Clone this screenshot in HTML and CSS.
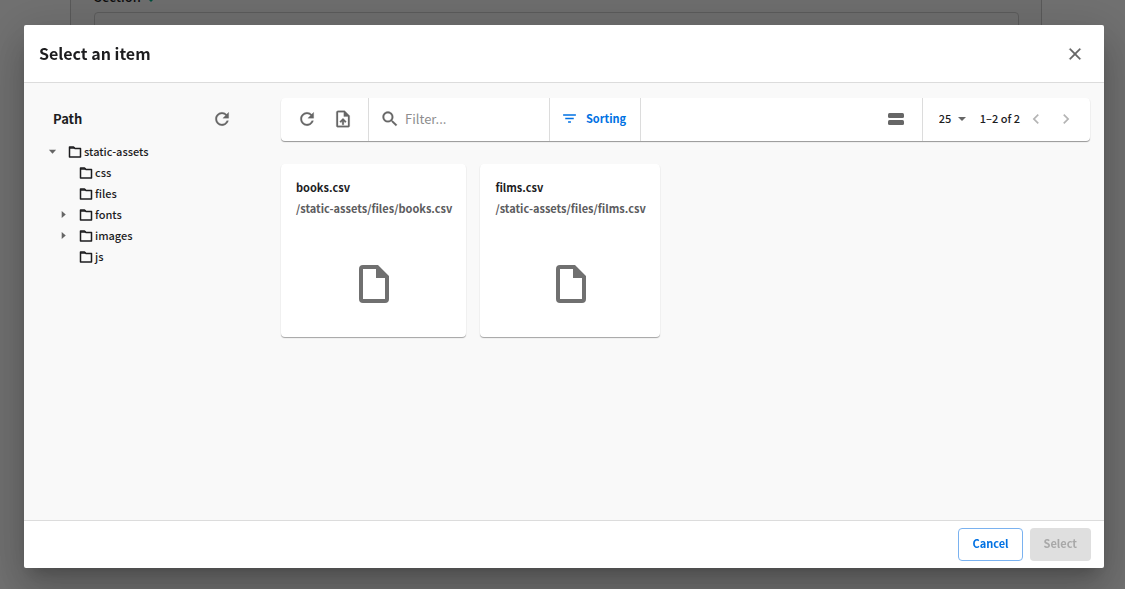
FILE: index.html
```html
<!DOCTYPE html>
<html lang="en">
<head>
    <meta charset="UTF-8">
    <title>Select an item</title>
    <link rel="stylesheet" href="styles.css">
</head>
<body>
    <div class="page">
        <div class="panel">
            <div class="panel-label">
                Section
                <svg class="valid-icon" viewBox="0 0 10 10"><path d="M5 0l5 5-5 5-5-5z"/></svg>
            </div>
            <div class="panel-field"></div>
        </div>
    </div>

    <div class="backdrop">
        <div class="dialog" role="dialog" aria-labelledby="dialogTitle">
            <header class="dialog-header">
                <h1 id="dialogTitle">Select an item</h1>
                <button class="icon-btn" aria-label="Close">
                    <svg class="icon icon-bold" viewBox="0 0 24 24"><path d="M19 6.41L17.59 5 12 10.59 6.41 5 5 6.41 10.59 12 5 17.59 6.41 19 12 13.41 17.59 19 19 17.59 13.41 12z"/></svg>
                </button>
            </header>

            <div class="dialog-content">
                <aside class="sidebar">
                    <div class="sidebar-header">
                        <h2>Path</h2>
                        <button class="icon-btn" aria-label="Refresh tree">
                            <svg class="icon icon-bold" viewBox="0 0 24 24"><path d="M17.65 6.35C16.2 4.9 14.21 4 12 4c-4.42 0-7.99 3.58-7.99 8s3.57 8 7.99 8c3.73 0 6.84-2.55 7.73-6h-2.08c-.82 2.33-3.04 4-5.65 4-3.31 0-6-2.69-6-6s2.69-6 6-6c1.66 0 3.14.69 4.22 1.78L13 11h7V4l-2.35 2.35z"/></svg>
                        </button>
                    </div>
                    <ul class="tree">
                        <li>
                            <div class="tree-item">
                                <svg class="caret" viewBox="0 0 10 10"><path d="M1 3h8L5 7.500z"/></svg>
                                <svg class="folder" viewBox="0 0 14 12"><path d="M1.500 1h4l1.500 1.500h5.500v8.500h-11z"/><path d="M1.500 2h5"/></svg>
                                <span>static-assets</span>
                            </div>
                            <ul>
                                <li class="tree-item">
                                    <span class="caret"></span>
                                    <svg class="folder" viewBox="0 0 14 12"><path d="M1.500 1h4l1.500 1.500h5.500v8.500h-11z"/><path d="M1.500 2h5"/></svg>
                                    <span>css</span>
                                </li>
                                <li class="tree-item">
                                    <span class="caret"></span>
                                    <svg class="folder" viewBox="0 0 14 12"><path d="M1.500 1h4l1.500 1.500h5.500v8.500h-11z"/><path d="M1.500 2h5"/></svg>
                                    <span>files</span>
                                </li>
                                <li class="tree-item">
                                    <svg class="caret" viewBox="0 0 10 10"><path d="M3 1v8l4.500-4z"/></svg>
                                    <svg class="folder" viewBox="0 0 14 12"><path d="M1.500 1h4l1.500 1.500h5.500v8.500h-11z"/><path d="M1.500 2h5"/></svg>
                                    <span>fonts</span>
                                </li>
                                <li class="tree-item">
                                    <svg class="caret" viewBox="0 0 10 10"><path d="M3 1v8l4.500-4z"/></svg>
                                    <svg class="folder" viewBox="0 0 14 12"><path d="M1.500 1h4l1.500 1.500h5.500v8.500h-11z"/><path d="M1.500 2h5"/></svg>
                                    <span>images</span>
                                </li>
                                <li class="tree-item">
                                    <span class="caret"></span>
                                    <svg class="folder" viewBox="0 0 14 12"><path d="M1.500 1h4l1.500 1.500h5.500v8.500h-11z"/><path d="M1.500 2h5"/></svg>
                                    <span>js</span>
                                </li>
                            </ul>
                        </li>
                    </ul>
                </aside>

                <main class="main">
                    <div class="toolbar">
                        <div class="toolbar-group actions">
                            <button class="icon-btn" aria-label="Refresh">
                                <svg class="icon icon-bold" viewBox="0 0 24 24"><path d="M17.65 6.35C16.2 4.9 14.21 4 12 4c-4.42 0-7.99 3.58-7.99 8s3.57 8 7.99 8c3.73 0 6.84-2.55 7.73-6h-2.08c-.82 2.33-3.04 4-5.65 4-3.31 0-6-2.69-6-6s2.69-6 6-6c1.66 0 3.14.69 4.22 1.78L13 11h7V4l-2.35 2.35z"/></svg>
                            </button>
                            <button class="icon-btn" aria-label="Upload">
                                <svg class="icon icon-bold" viewBox="0 0 24 24"><path d="M14 2H6c-1.100 0-1.990.9-1.990 2L4 20c0 1.100.89 2 1.990 2H18c1.100 0 2-.9 2-2V8l-6-6zm4 18H6V4h7v5h5v11zM8 15.010l1.410 1.410L11 14.840V19h2v-4.160l1.590 1.590L16 15.010 12.010 11z"/></svg>
                            </button>
                        </div>
                        <div class="toolbar-group search">
                            <svg class="icon icon-bold" viewBox="0 0 24 24"><path d="M15.500 14h-.79l-.28-.27C15.410 12.590 16 11.110 16 9.500 16 5.910 13.090 3 9.500 3S3 5.910 3 9.500 5.910 16 9.500 16c1.610 0 3.090-.59 4.230-1.570l.27.28v.79l5 4.990L20.490 19l-4.990-5zm-6 0C7.010 14 5 11.990 5 9.500S7.010 5 9.500 5 14 7.010 14 9.500 11.990 14 9.500 14z"/></svg>
                            <input type="text" placeholder="Filter..." aria-label="Filter">
                        </div>
                        <button class="toolbar-group sorting">
                            <svg viewBox="0 0 24 24"><path d="M10 18h4v-2h-4v2zM3 6v2h18V6H3zm3 7h12v-2H6v2z"/></svg>
                            Sorting
                        </button>
                        <div class="toolbar-group view">
                            <button class="icon-btn" aria-label="Compact view">
                                <svg class="icon" viewBox="0 0 20 20"><rect x="2" y="4" width="16" height="5" rx="1.500"/><rect x="2" y="11" width="16" height="5" rx="1.500"/></svg>
                            </button>
                        </div>
                        <div class="toolbar-group pagination">
                            <label class="page-size">
                                <select aria-label="Items per page">
                                    <option>25</option>
                                </select>
                                <svg viewBox="0 0 8 4"><path d="M0 0h8L4 4z"/></svg>
                            </label>
                            <span class="range">1–2 of 2</span>
                            <button class="icon-btn" aria-label="Previous page" disabled>
                                <svg class="icon" viewBox="0 0 24 24"><path d="M15.410 7.410L14 6l-6 6 6 6 1.410-1.410L10.830 12z"/></svg>
                            </button>
                            <button class="icon-btn" aria-label="Next page" disabled>
                                <svg class="icon" viewBox="0 0 24 24"><path d="M10 6L8.590 7.410 13.170 12l-4.580 4.590L10 18l6-6z"/></svg>
                            </button>
                        </div>
                    </div>

                    <div class="cards">
                        <article class="card">
                            <h3>books.csv</h3>
                            <p>/static-assets/files/books.csv</p>
                            <svg class="file-icon" viewBox="0 0 30 38"><path d="M4 0h15l11 11v23a4 4 0 0 1-4 4H4a4 4 0 0 1-4-4V4a4 4 0 0 1 4-4zm0 4v30h22V13h-9V4z" fill-rule="evenodd"/></svg>
                        </article>
                        <article class="card">
                            <h3>films.csv</h3>
                            <p>/static-assets/files/films.csv</p>
                            <svg class="file-icon" viewBox="0 0 30 38"><path d="M4 0h15l11 11v23a4 4 0 0 1-4 4H4a4 4 0 0 1-4-4V4a4 4 0 0 1 4-4zm0 4v30h22V13h-9V4z" fill-rule="evenodd"/></svg>
                        </article>
                    </div>
                </main>
            </div>

            <footer class="dialog-footer">
                <button class="btn btn-outlined">Cancel</button>
                <button class="btn" disabled>Select</button>
            </footer>
        </div>
    </div>
</body>
</html>
```

FILE: styles.css
```css
:root {
    --primary: #0071e3;
    --primary-border: #7ab2f0;
    --text: #1d1d1f;
    --text-secondary: #5c5c5e;
    --icon: #666666;
    --disabled: #b4b4b4;
    --border: #dcdcdc;
    --surface: #f9f9f9;
}

* {
    box-sizing: border-box;
}

body {
    margin: 0;
    font-family: "Noto Sans CJK SC", "Open Sans", sans-serif;
    font-size: 11px;
    font-weight: 500;
    line-height: 21px;
    color: var(--text);
    background: #f8f8f8;
}

h1, h2, h3, p, ul {
    margin: 0;
    padding: 0;
}

ul {
    list-style: none;
}

button, input, select {
    font: inherit;
    color: inherit;
    border: none;
    background: none;
    padding: 0;
    margin: 0;
}

svg {
    display: block;
    flex: none;
    fill: currentColor;
}

.page {
    height: 100vh;
    overflow: hidden;
    padding: 0 83px 19px 70px;
}

.panel {
    height: 100%;
    padding: 0 22px 0 23px;
    background: #f2f2f2;
    border: 1px solid #c4c4c4;
    border-top: none;
    border-radius: 0 0 4px 4px;
}

.panel-label {
    display: flex;
    align-items: center;
    gap: 5px;
    margin-top: -14px;
    font-size: 13px;
}

.valid-icon {
    width: 10px;
    height: 10px;
    color: #00a884;
}

.panel-field {
    height: 40px;
    margin-top: 5px;
    border: 1px solid #c8c8c8;
    border-radius: 4px;
}

.backdrop {
    position: fixed;
    inset: 0;
    display: flex;
    padding: 25px 21px 21px 24px;
    background: rgba(0, 0, 0, 0.55);
}

.dialog {
    flex: 1;
    display: flex;
    flex-direction: column;
    background: white;
    border-radius: 2px;
    overflow: hidden;
    box-shadow: 0 11px 15px -7px rgba(0, 0, 0, 0.2), 0 24px 38px 3px rgba(0, 0, 0, 0.14), 0 9px 46px 8px rgba(0, 0, 0, 0.12);
}

.dialog-header {
    display: flex;
    justify-content: space-between;
    align-items: center;
    height: 58px;
    padding: 0 19px 0 15px;
    border-bottom: 1px solid var(--border);
}

h1 {
    font-size: 16px;
    font-weight: 700;
}

.icon-btn {
    color: var(--icon);
    cursor: pointer;
}

.icon-btn:disabled {
    color: var(--disabled);
    cursor: default;
}

.icon {
    width: 20px;
    height: 20px;
}

.icon-bold {
    stroke: currentColor;
    stroke-width: 0.3;
}

.dialog-content {
    flex: 1;
    display: flex;
    background: var(--surface);
}

.sidebar {
    width: 257px;
    padding: 15px 24px;
}

.sidebar-header {
    display: flex;
    justify-content: space-between;
    align-items: center;
    height: 43px;
    padding: 0 25px 2px 5px;
}

h2 {
    font-size: 13px;
    font-weight: 700;
}

.tree ul {
    padding-left: 11px;
}

.tree-item {
    display: flex;
    align-items: center;
    height: 21px;
}

.caret {
    width: 9px;
    height: 9px;
    margin-right: 11px;
    color: var(--icon);
}

.folder {
    width: 14px;
    height: 12px;
    margin-right: 2px;
    fill: none;
    stroke: var(--text);
    stroke-width: 1.5;
    stroke-linejoin: round;
}

.main {
    flex: 1;
    padding: 15px 14px 15px 0;
}

.toolbar {
    display: flex;
    height: 43px;
    background: white;
    border-radius: 4px;
    box-shadow: 0 1px 1px rgba(0, 0, 0, 0.4);
}

.toolbar-group {
    display: flex;
    align-items: center;
    padding-bottom: 1px;
    border-right: 1px solid var(--border);
}

.toolbar-group:last-child {
    border-right: none;
}

.actions {
    gap: 16px;
    padding: 0 15px 1px 16px;
}

.search {
    gap: 5px;
    width: 181px;
    padding: 0 11px 2px;
    color: var(--icon);
}

.search input {
    flex: 1;
    min-width: 0;
    font-size: 13px;
    font-weight: 400;
    outline: none;
}

.search input::placeholder {
    color: #8e8e8e;
}

.sorting {
    gap: 8px;
    padding: 0 14px 2px 11px;
    color: var(--primary);
    font-weight: 700;
    cursor: pointer;
}

.sorting svg {
    width: 17px;
    height: 17px;
}

.view {
    flex: 1;
    justify-content: flex-end;
    padding-right: 16px;
}

.pagination {
    padding: 0 14px 2px 16px;
}

.page-size {
    display: flex;
    align-items: center;
    gap: 6px;
    margin-right: 14px;
    color: var(--icon);
}

.page-size select {
    appearance: none;
    color: var(--text);
}

.page-size svg {
    width: 8px;
    height: 4px;
}

.range {
    margin-right: 6px;
}

.pagination .icon-btn + .icon-btn {
    margin-left: 10px;
}

.cards {
    display: flex;
    gap: 14px;
    margin-top: 23px;
}

.card {
    padding: 13px 14px 34px 15px;
    background: white;
    border-radius: 4px;
    box-shadow: 0 1px 1px rgba(0, 0, 0, 0.35);
}

.card h3 {
    font-size: 11px;
    font-weight: 700;
}

.card p {
    color: var(--text-secondary);
    font-weight: 700;
}

.file-icon {
    width: 30px;
    height: 38px;
    margin: 46px auto 0;
    color: #707070;
}

.dialog-footer {
    display: flex;
    justify-content: flex-end;
    gap: 7px;
    padding: 7px 13px;
    border-top: 1px solid var(--border);
}

.btn {
    height: 33px;
    padding: 0 14px 2px;
    border-radius: 4px;
    font-weight: 700;
    cursor: pointer;
}

.btn-outlined {
    padding: 0 13px 2px;
    color: var(--primary);
    border: 1px solid var(--primary-border);
}

.btn:disabled {
    color: #a8a8a8;
    background: #dfdfdf;
    cursor: default;
}
```
